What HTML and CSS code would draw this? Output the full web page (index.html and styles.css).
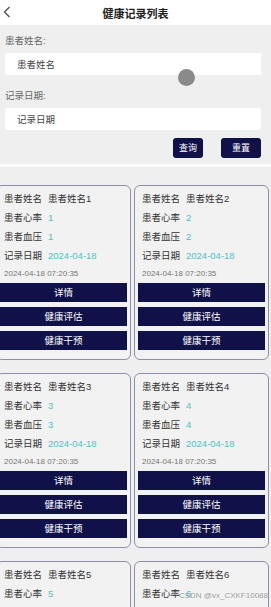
FILE: index.html
```html
<!DOCTYPE html>
<html lang="zh-CN">
<head>
	<meta charset="UTF-8">
	<title>健康记录列表</title>
	<link rel="stylesheet" href="styles.css">
</head>
<body>
	<header class="nav">
		<a href="javascript:;" class="back">
			<svg width="8" height="12" viewBox="0 0 8 12"><path d="M6.5 1 L1.5 6 L6.5 11" fill="none" stroke="#555" stroke-width="1.4"/></svg>
		</a>
		<h1>健康记录列表</h1>
	</header>
	<form class="search">
		<div class="field">
			<label>患者姓名:</label>
			<input type="text" placeholder="患者姓名">
		</div>
		<div class="field field-next">
			<label>记录日期:</label>
			<input type="text" placeholder="记录日期">
		</div>
		<div class="actions">
			<a href="javascript:;" class="btn btn-query">查询</a>
			<a href="javascript:;" class="btn btn-reset">重置</a>
		</div>
	</form>
	<div class="divider"></div>
	<ul class="records">
		<li class="card">
			<div class="row"><span class="key">患者姓名</span><span>患者姓名1</span></div>
			<div class="row"><span class="key">患者心率</span><span class="val">1</span></div>
			<div class="row"><span class="key">患者血压</span><span class="val">1</span></div>
			<div class="row"><span class="key">记录日期</span><span class="val">2024-04-18</span></div>
			<div class="time">2024-04-18 07:20:35</div>
			<a href="javascript:;" class="op">详情</a>
			<a href="javascript:;" class="op">健康评估</a>
			<a href="javascript:;" class="op">健康干预</a>
		</li>
		<li class="card">
			<div class="row"><span class="key">患者姓名</span><span>患者姓名2</span></div>
			<div class="row"><span class="key">患者心率</span><span class="val">2</span></div>
			<div class="row"><span class="key">患者血压</span><span class="val">2</span></div>
			<div class="row"><span class="key">记录日期</span><span class="val">2024-04-18</span></div>
			<div class="time">2024-04-18 07:20:35</div>
			<a href="javascript:;" class="op">详情</a>
			<a href="javascript:;" class="op">健康评估</a>
			<a href="javascript:;" class="op">健康干预</a>
		</li>
		<li class="card">
			<div class="row"><span class="key">患者姓名</span><span>患者姓名3</span></div>
			<div class="row"><span class="key">患者心率</span><span class="val">3</span></div>
			<div class="row"><span class="key">患者血压</span><span class="val">3</span></div>
			<div class="row"><span class="key">记录日期</span><span class="val">2024-04-18</span></div>
			<div class="time">2024-04-18 07:20:35</div>
			<a href="javascript:;" class="op">详情</a>
			<a href="javascript:;" class="op">健康评估</a>
			<a href="javascript:;" class="op">健康干预</a>
		</li>
		<li class="card">
			<div class="row"><span class="key">患者姓名</span><span>患者姓名4</span></div>
			<div class="row"><span class="key">患者心率</span><span class="val">4</span></div>
			<div class="row"><span class="key">患者血压</span><span class="val">4</span></div>
			<div class="row"><span class="key">记录日期</span><span class="val">2024-04-18</span></div>
			<div class="time">2024-04-18 07:20:35</div>
			<a href="javascript:;" class="op">详情</a>
			<a href="javascript:;" class="op">健康评估</a>
			<a href="javascript:;" class="op">健康干预</a>
		</li>
		<li class="card">
			<div class="row"><span class="key">患者姓名</span><span>患者姓名5</span></div>
			<div class="row"><span class="key">患者心率</span><span class="val">5</span></div>
			<div class="row"><span class="key">患者血压</span><span class="val">5</span></div>
			<div class="row"><span class="key">记录日期</span><span class="val">2024-04-18</span></div>
			<div class="time">2024-04-18 07:20:35</div>
			<a href="javascript:;" class="op">详情</a>
			<a href="javascript:;" class="op">健康评估</a>
			<a href="javascript:;" class="op">健康干预</a>
		</li>
		<li class="card">
			<div class="row"><span class="key">患者姓名</span><span>患者姓名6</span></div>
			<div class="row"><span class="key">患者心率</span><span class="val">6</span></div>
			<div class="row"><span class="key">患者血压</span><span class="val">6</span></div>
			<div class="row"><span class="key">记录日期</span><span class="val">2024-04-18</span></div>
			<div class="time">2024-04-18 07:20:35</div>
			<a href="javascript:;" class="op">详情</a>
			<a href="javascript:;" class="op">健康评估</a>
			<a href="javascript:;" class="op">健康干预</a>
		</li>
	</ul>
	<div class="touch"></div>
	<div class="mark">CSDN @vx_CXKF10088</div>
</body>
</html>
```

FILE: styles.css
```css
*{
	box-sizing: border-box;
}
a{
	text-decoration: none;
}
body{
	margin: 0;
	background-color: #efefef;
	font-family: "Liberation Sans", "Noto Sans CJK SC", sans-serif;
	font-size: 9.5px;
	color: #333;
	overflow: hidden;
	height: 607px;
	position: relative;
}
	.nav{
		height: 25px;
		background-color: #fff;
		position: relative;
		display: flex;
		align-items: center;
		justify-content: center;
	}
	.back{
		position: absolute;
		left: 3px;
		top: 6px;
		display: flex;
	}
	.nav h1{
		margin: 0;
		font-size: 11px;
		font-weight: bold;
		color: #222;
	}

	.search{
		padding: 9px 10px 6px 5px;
	}
	.field label{
		display: block;
		height: 14px;
		line-height: 14px;
		margin: 0 0 5px;
		color: #666;
	}
	.field-next{
		margin-top: 14px;
	}
	.field input{
		display: block;
		width: 100%;
		height: 22px;
		border: none;
		border-radius: 2px;
		background-color: #fff;
		padding: 0 12px;
		font: inherit;
		outline: none;
	}
	.field input::placeholder{
		color: #444;
	}
	.actions{
		margin-top: 8px;
		display: flex;
		justify-content: flex-end;
		gap: 18px;
	}
	.btn{
		display: block;
		height: 20px;
		line-height: 20px;
		border-radius: 3px;
		background-color: #11114a;
		color: #fff;
		text-align: center;
		font-size: 9px;
	}
	.btn-query{
		width: 30px;
	}
	.btn-reset{
		width: 40px;
	}
	.divider{
		height: 3px;
		background-color: #fff;
	}

	.records{
		list-style: none;
		margin: 0 0 0 -4px;
		padding: 18px 0 0;
		width: 273px;
		display: grid;
		grid-template-columns: 135px 135px;
		column-gap: 3px;
		row-gap: 13px;
	}
	.card{
		border: 1px solid #8e8ea8;
		border-radius: 6px;
		background-color: #f2f2f2;
		padding: 3px 3px 9px;
	}
	.row{
		display: flex;
		gap: 6px;
		height: 19px;
		line-height: 19px;
		padding: 0 4px;
		white-space: nowrap;
	}
	.val{
		color: #4fc1c6;
	}
	.time{
		height: 18px;
		line-height: 18px;
		padding: 0 4px;
		font-size: 8px;
		color: #777;
		white-space: nowrap;
	}
	.op{
		display: block;
		height: 19px;
		line-height: 19px;
		background-color: #11114a;
		color: #fff;
		text-align: center;
	}
	.op + .op{
		margin-top: 5px;
	}

	.touch{
		position: absolute;
		left: 178px;
		top: 69px;
		width: 17px;
		height: 17px;
		border-radius: 50%;
		background-color: #8a8a8a;
		filter: blur(0.6px);
	}
	.mark{
		position: absolute;
		right: 3px;
		bottom: 7px;
		font-size: 8px;
		color: rgba(140,140,140,0.85);
		white-space: nowrap;
	}
```
